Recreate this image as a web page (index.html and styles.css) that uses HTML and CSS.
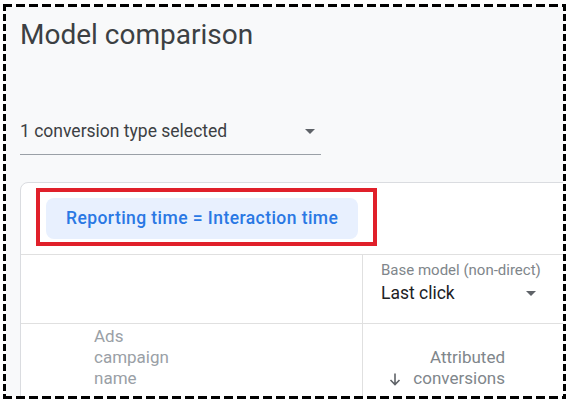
FILE: index.html
```html
<!DOCTYPE html>
<html lang="en">
<head>
<meta charset="utf-8">
<title>Model comparison</title>
<link rel="stylesheet" href="styles.css">
</head>
<body>
<div class="frame">
  <div class="page">
    <h1 class="title">Model comparison</h1>
    <div class="dropdown">
      <span class="dropdown-text">1 conversion type selected</span>
      <span class="caret"></span>
    </div>
    <div class="card">
      <div class="chip-bar">
        <div class="highlight">
          <div class="chip">Reporting time = Interaction time</div>
        </div>
      </div>
      <div class="table">
        <div class="row head">
          <div class="cell name-head"></div>
          <div class="cell model-head">
            <div class="model-label">Base model (non-direct)</div>
            <div class="model-select">
              <span>Last click</span>
              <span class="caret"></span>
            </div>
          </div>
        </div>
        <div class="row body">
          <div class="cell name-cell">
            <div class="lines">Google<br>Ads<br>campaign<br>name</div>
          </div>
          <div class="cell metric-cell">
            <div>Attributed</div>
            <div class="sort"><svg class="arrow" viewBox="0 0 12 14" width="12" height="14"><path d="M6 1.5V12.5M1.5 8L6 12.5L10.5 8" fill="none" stroke="#5f6368" stroke-width="1.6"/></svg>conversions</div>
          </div>
        </div>
      </div>
    </div>
  </div>
</div>
</body>
</html>
```
FILE: styles.css
```css
* { box-sizing: border-box; }
html, body { margin: 0; padding: 0; background: #fff; }
body { font-family: Roboto, "Liberation Sans", Arial, sans-serif; }

.frame {
  margin: 4px 0 0 3px;
  width: 563px;
  height: 395px;
  padding: 3px;
  background:
    repeating-linear-gradient(to right, #000 0 9px, transparent 9px 13px) top left / 100% 3px no-repeat,
    repeating-linear-gradient(to right, #000 0 9px, transparent 9px 13px) bottom left / 100% 3px no-repeat,
    repeating-linear-gradient(to bottom, #000 0 7px, transparent 7px 10px) top left / 3px 100% no-repeat,
    repeating-linear-gradient(to bottom, #000 0 7px, transparent 7px 10px) top right / 3px 100% no-repeat,
    #fff;
}

.page {
  width: 557px;
  height: 389px;
  background: #f8f9fa;
  overflow: hidden;
  padding: 11px 0 0 14px;
}

.title {
  margin: 0;
  font-weight: 400;
  font-size: 28px;
  line-height: 34px;
  color: #3c4043;
}

.dropdown {
  margin-top: 67px;
  width: 301px;
  display: flex;
  align-items: center;
  justify-content: space-between;
  padding: 0 6px 11px 0;
  border-bottom: 1px solid #9aa0a6;
  font-size: 17.5px;
  line-height: 24px;
  color: #3c4043;
}

.caret {
  width: 0;
  height: 0;
  border-left: 5px solid transparent;
  border-right: 5px solid transparent;
  border-top: 5px solid #5f6368;
}

.card {
  margin-top: 27px;
  width: 620px;
  background: #fff;
  border: 1px solid #dadce0;
  border-radius: 8px;
}

.chip-bar {
  display: flex;
  padding: 5px 0 8px 15px;
}

.highlight {
  border: 4px solid #e0202a;
  padding: 6px 15px 3px 6px;
}

.chip {
  height: 41px;
  line-height: 41px;
  padding: 0 20px;
  background: #e8f0fe;
  border-radius: 8px;
  color: #2a78e4;
  font-size: 17.5px;
  font-weight: 500;
  letter-spacing: 0.43px;
  white-space: nowrap;
}

.row {
  display: grid;
  grid-template-columns: 341px 200px;
}

.head {
  border-top: 1px solid #e0e0e0;
  border-bottom: 1px solid #e0e0e0;
  height: 70px;
}

.model-head {
  border-left: 1px solid #e0e0e0;
  padding: 7px 25px 0 18px;
}

.model-label {
  font-size: 15px;
  line-height: 17px;
  color: #80868b;
  white-space: nowrap;
}

.model-select {
  margin-top: 2px;
  display: flex;
  align-items: center;
  justify-content: space-between;
  font-size: 17.5px;
  line-height: 24px;
  color: #202124;
}

.model-select .caret { margin-right: 1px; }

.body {
  height: 80px;
  overflow: hidden;
}

.name-cell {
  padding-left: 73px;
}

.lines {
  margin-top: -19px;
  font-size: 17px;
  line-height: 21px;
  color: #9aa0a6;
}

.metric-cell {
  border-left: 1px solid #e0e0e0;
  padding: 23px 57px 0 0;
  text-align: right;
  font-size: 17px;
  line-height: 21px;
  color: #80868b;
}

.sort {
  display: flex;
  justify-content: flex-end;
  align-items: center;
}

.arrow {
  margin-right: 12px;
}
```
